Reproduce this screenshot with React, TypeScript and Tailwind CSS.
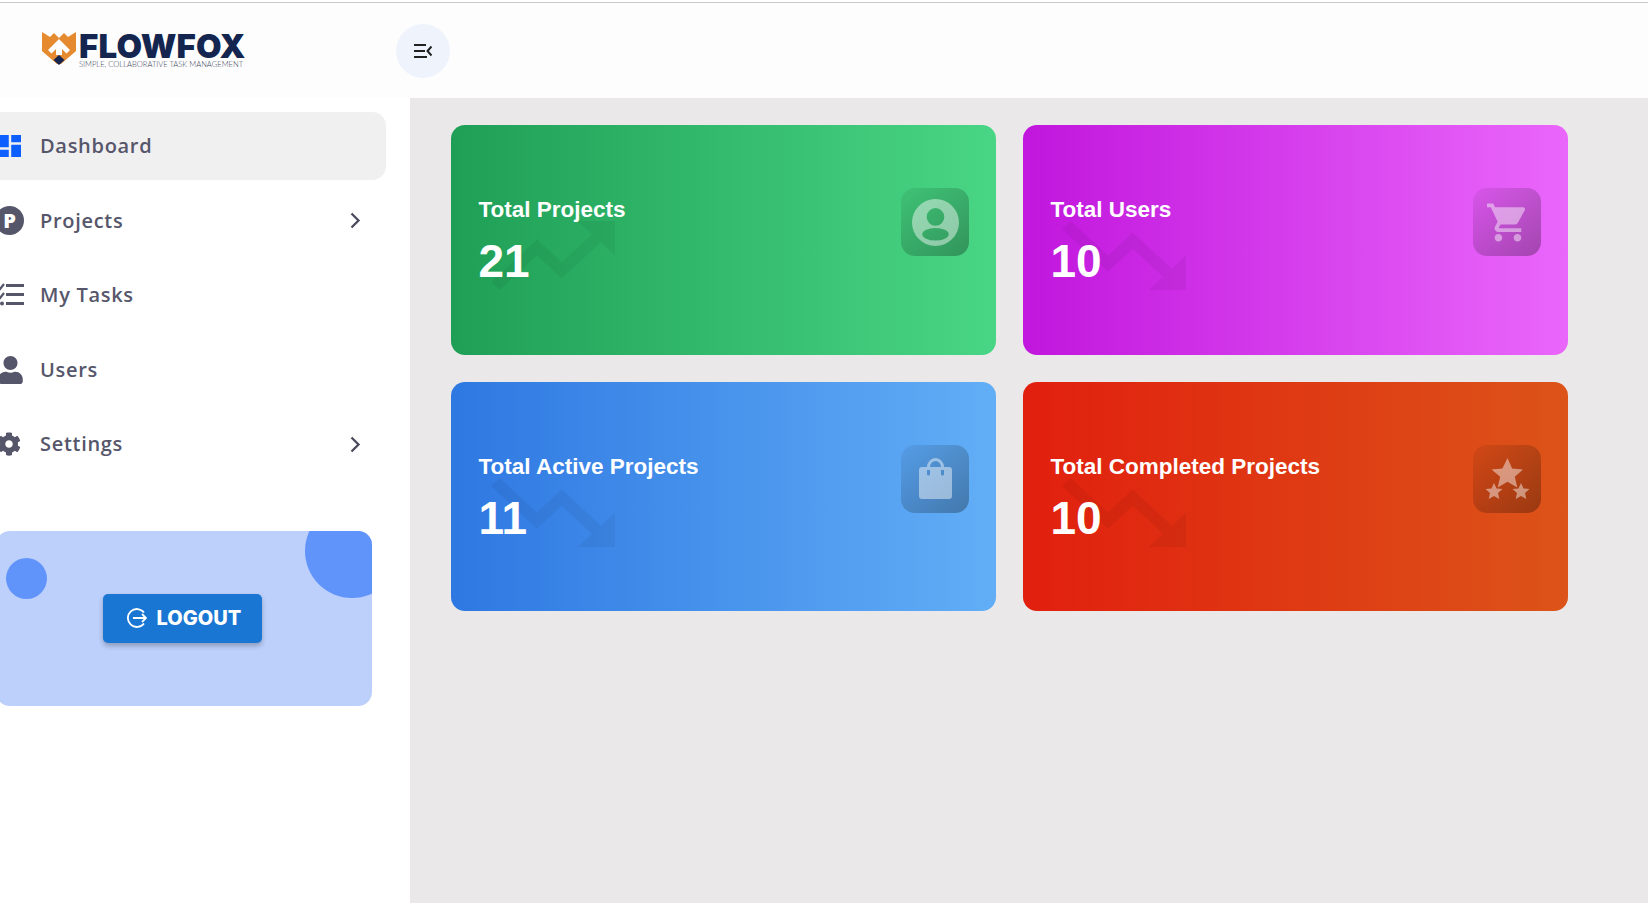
import type { ReactNode } from "react";
import { FaCog, FaUser } from "react-icons/fa";

const NAV = [
  { label: "Dashboard", icon: <DashboardIcon />, active: true },
  { label: "Projects", icon: <ProjectIcon />, more: true },
  { label: "My Tasks", icon: <TasksIcon /> },
  { label: "Users", icon: <FaUser className="ml-[-2px] h-[28px] w-[25px]" /> },
  { label: "Settings", icon: <FaCog className="ml-[-3px] h-[24px] w-[24px]" />, more: true },
];

const UP = "M16 6l2.29 2.29-4.88 4.88-4-4L2 16.59 3.41 18l6-6 4 4 6.3-6.29L22 12V6z";
const DOWN = "M16 18l2.29-2.29-4.88-4.88-4 4L2 7.41 3.41 6l6 6 4-4 6.3 6.29L22 12v6z";

function DashboardIcon() {
  return (
    <svg viewBox="3 3 18 18" className="ml-[-1px] h-[22px] w-[22px] fill-[#0d5fff]">
      <path d="M3 13h8V3H3v10zm0 8h8v-6H3v6zm10 0h8V11h-8v10zm0-18v6h8V3h-8z" />
    </svg>
  );
}

function ProjectIcon() {
  return (
    <div className="ml-[-5px] flex h-[29px] w-[29px] items-center justify-center rounded-full bg-[#56566b] font-['Open_Sans',sans-serif] text-[20px] font-extrabold leading-none text-white">
      P
    </div>
  );
}

function TasksIcon() {
  return (
    <svg viewBox="0 0 29 24" className="ml-[-5px] h-[24px] w-[29px]">
      <path d="M11 1h18v3H11zM11 10h18v3H11zM11 19h18v3H11z" fill="#56566b" />
      <path d="M2 3l3 3 4-5M2 12l3 3 4-5" fill="none" stroke="#56566b" strokeWidth="2.2" />
      <circle cx="7" cy="20.500" r="2" fill="#56566b" />
    </svg>
  );
}

function Logo() {
  return (
    <div className="ml-[42px] mt-[-2px] flex w-[204px] items-start">
      <svg viewBox="0 0 34 34" className="h-[34px] w-[34px] shrink-0">
        <path d="M0 1l8 5 4-4 5 5 5-5 4 4 8-5v19L19 33h-4L0 20z" fill="#e58a2e" />
        <path d="M17 8l11 11-3.500 3.500L20 18v6h-6v-6l-4.500 4.500L6 19z" fill="#fff" />
        <path d="M17 24l5.500 5-5.500 5-5.500-5z" fill="#14264f" />
      </svg>
      <div className="ml-[3px] flex flex-col">
        <span className="font-['Inter',sans-serif] text-[33px] font-black leading-[30px] tracking-[0.2px] text-[#14264f]">FLOWFOX</span>
        <span className="mt-[-1px] whitespace-nowrap font-['Lato',sans-serif] text-[7.6px] font-light leading-[9px] text-[#3f4a60]">
          SIMPLE, COLLABORATIVE TASK MANAGEMENT
        </span>
      </div>
    </div>
  );
}

function NavRow({ label, icon, active, more }: { label: string; icon: ReactNode; active?: boolean; more?: boolean }) {
  return (
    <div
      className={`flex h-[68px] items-center rounded-r-[14px] pr-[25px] ${active ? "bg-[#f0f0f1]" : ""}`}
    >
      <span className="flex w-[40px] shrink-0 items-center text-[#56566b]">{icon}</span>
      <span className="flex-1 font-['Open_Sans',sans-serif] text-[20px] font-semibold tracking-[0.7px] text-[#56566b]">
        {label}
      </span>
      {more && (
        <svg viewBox="0 0 11 17" className="h-[17px] w-[11px] fill-none stroke-[#4b4b5e] stroke-[2.3]">
          <path d="M1.500 1.500l7 7-7 7" />
        </svg>
      )}
    </div>
  );
}

function LogoutCard() {
  return (
    <div className="relative mt-[53px] ml-[-4px] flex h-[175px] w-[376px] items-center justify-center overflow-hidden rounded-[14px] bg-[#bcd0fb]">
      <div className="absolute left-[10px] top-[27px] h-[41px] w-[41px] rounded-full bg-[#6094fb]" />
      <div className="absolute left-[309px] top-[-27px] h-[94px] w-[94px] rounded-full bg-[#6094fb]" />
      <button className="mr-[4px] flex h-[49px] w-[159px] items-center justify-center gap-[10px] rounded-[5px] bg-[#1976d2] pb-[1px] pl-[4px] text-white shadow-[0_3px_5px_rgba(0,0,0,0.25)]">
        <svg viewBox="0 0 20 20" className="h-[20px] w-[20px] fill-none stroke-white stroke-[1.800]">
          <path d="M17 4.500A9 9 0 1 0 17 15.500" />
          <path d="M6 10h13M15 6l4 4-4 4" />
        </svg>
        <span className="font-['Inter',sans-serif] text-[20px] font-extrabold leading-none">LOGOUT</span>
      </button>
    </div>
  );
}

function IconUser() {
  return (
    <svg viewBox="0 0 48 48" className="h-[47px] w-[47px] fill-white/45">
      <path
        fillRule="evenodd"
        d="M24 0a24 24 0 1 0 0 48a24 24 0 1 0 0-48zM24 9.300a9 9 0 1 0 0 18a9 9 0 1 0 0-18zM10.500 36a13.500 6.500 0 1 0 27 0a13.500 6.500 0 1 0-27 0z"
      />
    </svg>
  );
}

function IconCart() {
  return (
    <svg viewBox="1 2 21 20" className="h-[39px] w-[40px] fill-white/45">
      <path d="M7 18c-1.100 0-1.990.9-1.990 2S5.900 22 7 22s2-.9 2-2-.9-2-2-2zM1 2v2h2l3.600 7.590-1.350 2.450c-.16.28-.25.61-.25.96 0 1.100.9 2 2 2h12v-2H7.420c-.14 0-.25-.11-.25-.25l.03-.12.9-1.630h7.450c.75 0 1.410-.41 1.750-1.030l3.580-6.470c.08-.14.12-.31.12-.48 0-.55-.45-1-1-1H5.210l-.94-2H1zm16 16c-1.100 0-1.990.9-1.990 2s.89 2 1.990 2 2-.9 2-2-.9-2-2-2z" />
    </svg>
  );
}

function IconBag() {
  return (
    <svg viewBox="0 0 33 41" className="h-[41px] w-[33px] fill-white/45">
      <path
        fillRule="evenodd"
        d="M8 9a8.500 9 0 0 1 17 0h5a3 3 0 0 1 3 3v26a3 3 0 0 1-3 3H3a3 3 0 0 1-3-3V12a3 3 0 0 1 3-3zM11 9h11a5.500 6 0 0 0-11 0zM8 12v4a1.500 1.500 0 0 0 3 0v-4zM22 12v4a1.500 1.500 0 0 0 3 0v-4z"
      />
    </svg>
  );
}

function IconStars() {
  return (
    <svg viewBox="0 0 45 41" className="h-[41px] w-[45px] fill-white/45">
      <path d="M22.500 0l4.600 10.500 10.900 1-8.200 7.300 2.500 10.700-9.800-5.700-9.800 5.700 2.500-10.700L6.500 11.500l10.900-1z" />
      <path d="M9 25l2.500 5.500 6 .6-4.500 4 1.300 5.900L9 38l-5.300 3 1.300-5.900-4.500-4 6-.6z" />
      <path d="M36 25l2.500 5.500 6 .6-4.500 4 1.300 5.900L36 38l-5.300 3 1.300-5.900-4.500-4 6-.6z" />
    </svg>
  );
}

function StatCard({ title, value, gradient, trend, trendLeft, icon }: { title: string; value: string; gradient: string; trend: string; trendLeft: string; icon: ReactNode }) {
  return (
    <div className={`relative flex h-[229.5px] justify-between overflow-hidden rounded-[14px] pl-[27.5px] pr-[27px] pt-[63px] ${gradient}`}>
      <svg viewBox="2 6 20 12" preserveAspectRatio="none" className={`absolute top-[96px] h-[69px] w-[124px] fill-black/5 ${trendLeft}`}>
        <path d={trend} />
      </svg>
      <div className="relative flex flex-col font-['Liberation_Sans',sans-serif] font-bold text-white">
        <span className="mt-[9px] text-[22.5px] leading-[26px]">{title}</span>
        <span className="mt-[10px] text-[46px] leading-[56px]">{value}</span>
      </div>
      <div className="relative flex h-[68px] w-[68px] items-center justify-center rounded-[14px] bg-linear-to-br/srgb from-black/5 to-black/30">
        {icon}
      </div>
    </div>
  );
}

export default function App() {
  return (
    <div className="flex h-screen w-full flex-col overflow-hidden bg-white">
      <div className="mt-[2px] h-[1px] bg-[#c8c8c8]" />
      <header className="flex h-[95px] shrink-0 items-center bg-[#fdfdfd]">
        <div className="w-[396px]">
          <Logo />
        </div>
        <button className="flex h-[54px] w-[54px] items-center justify-center rounded-full bg-[#eef3fc]">
          <svg viewBox="0 0 18 14" className="h-[14px] w-[18px] fill-none stroke-[#212121] stroke-2">
            <path d="M0 1h12M0 7h11M0 13h13M17.500 2.500L13.500 7l4 4.500" />
          </svg>
        </button>
      </header>
      <div className="flex min-h-0 flex-1">
        <aside className="flex w-[410px] shrink-0 flex-col bg-white pt-[14px]">
          <nav className="flex w-[386px] flex-col gap-[6.5px]">
            {NAV.map((n) => (
              <NavRow key={n.label} label={n.label} icon={n.icon} active={n.active} more={n.more} />
            ))}
          </nav>
          <LogoutCard />
        </aside>
        <main className="flex-1 bg-[#eae8e9] pl-[41px] pr-[80px] pt-[27px]">
          <div className="grid grid-cols-2 gap-[27px]">
            <StatCard title="Total Projects" value="21" gradient="bg-linear-to-r/srgb from-[#1f9f56] to-[#49d684]" trend={UP} trendLeft="left-[40px]" icon={<IconUser />} />
            <StatCard title="Total Users" value="10" gradient="bg-linear-to-r/srgb from-[#c116dd] to-[#ea67fb]" trend={DOWN} trendLeft="left-[39px]" icon={<IconCart />} />
            <StatCard title="Total Active Projects" value="11" gradient="bg-linear-to-r/srgb from-[#2e78e2] to-[#62aef6]" trend={DOWN} trendLeft="left-[40px]" icon={<IconBag />} />
            <StatCard title="Total Completed Projects" value="10" gradient="bg-linear-to-r/srgb from-[#e11f0e] to-[#dc5419]" trend={DOWN} trendLeft="left-[39px]" icon={<IconStars />} />
          </div>
        </main>
      </div>
    </div>
  );
}
